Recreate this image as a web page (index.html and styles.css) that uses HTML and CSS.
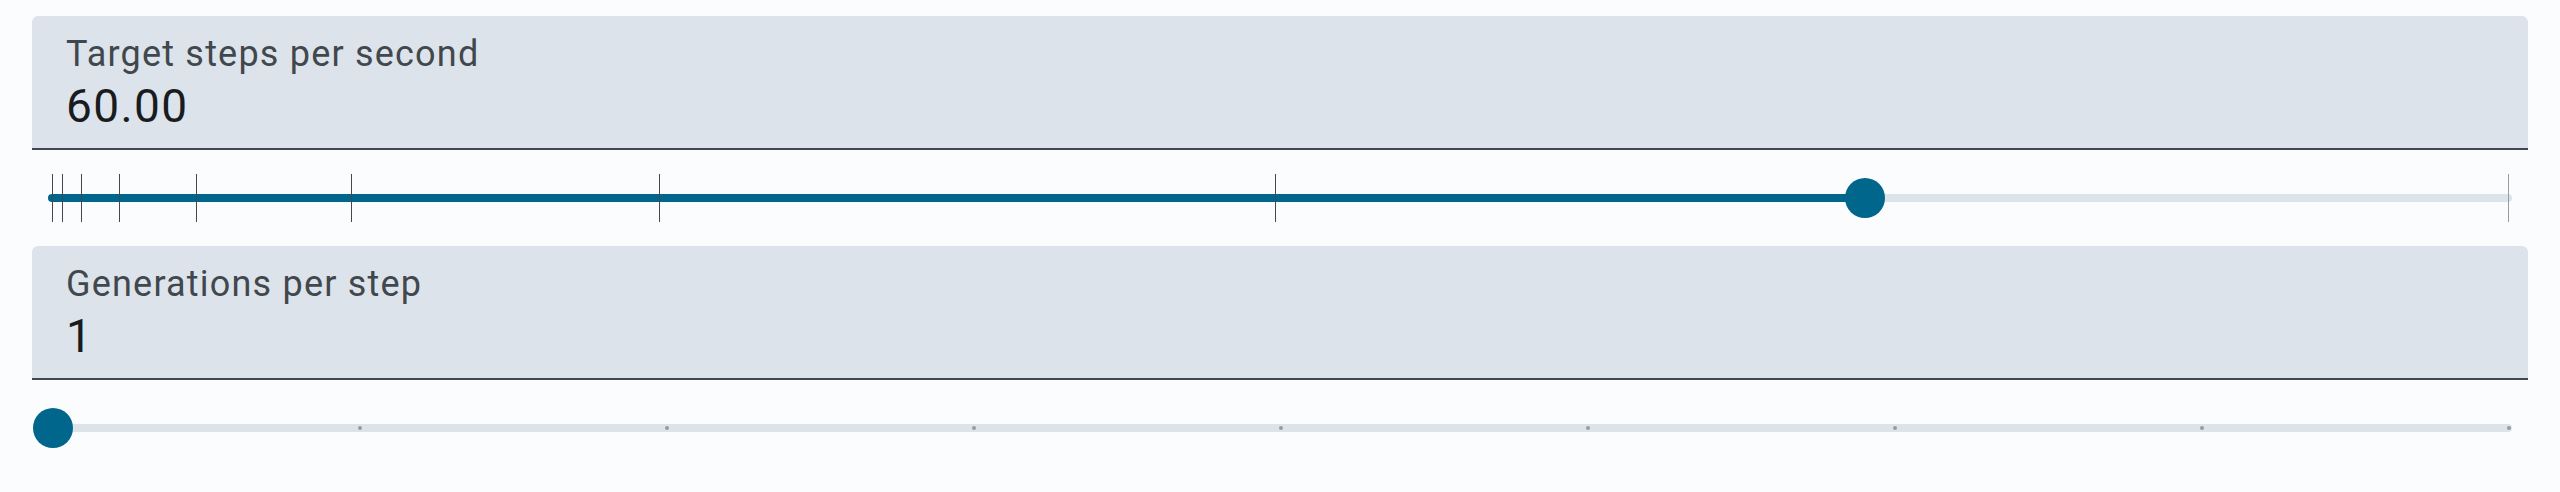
FILE: index.html
```html
<!DOCTYPE html>
<html lang="en">
<head>
<meta charset="utf-8">
<title>Simulation speed</title>
<link rel="stylesheet" href="styles.css">
</head>
<body>
<div class="panel">
  <div class="field">
    <div class="label">Target steps per second</div>
    <div class="value">60.00</div>
  </div>
  <div class="slider">
    <div class="track">
      <div class="rail">
        <div class="active" style="width: calc(73.78% + 4px)"></div>
        <div class="tick" style="left: 0%"></div>
        <div class="tick" style="left: 0.392%"></div>
        <div class="tick" style="left: 1.176%"></div>
        <div class="tick" style="left: 2.745%"></div>
        <div class="tick" style="left: 5.882%"></div>
        <div class="tick" style="left: 12.157%"></div>
        <div class="tick" style="left: 24.706%"></div>
        <div class="tick" style="left: 49.804%"></div>
        <div class="tick tick-off" style="left: 100%"></div>
        <div class="thumb" style="left: 73.78%"></div>
      </div>
    </div>
  </div>

  <div class="field">
    <div class="label">Generations per step</div>
    <div class="value">1</div>
  </div>
  <div class="slider">
    <div class="track">
      <div class="rail">
        <div class="dot" style="left: 12.5%"></div>
        <div class="dot" style="left: 25%"></div>
        <div class="dot" style="left: 37.5%"></div>
        <div class="dot" style="left: 50%"></div>
        <div class="dot" style="left: 62.5%"></div>
        <div class="dot" style="left: 75%"></div>
        <div class="dot" style="left: 87.5%"></div>
        <div class="dot" style="left: 100%"></div>
        <div class="thumb" style="left: 0%"></div>
      </div>
    </div>
  </div>
</div>
</body>
</html>
```

FILE: styles.css
```css
html, body {
  margin: 0;
  padding: 0;
  background: #fbfcfe;
}

body {
  font-family: Roboto, "Liberation Sans", sans-serif;
}

.panel {
  display: flex;
  flex-direction: column;
  padding: 16px 32px;
}

.field {
  box-sizing: border-box;
  height: 134px;
  background: #dde3ea;
  border-radius: 6px 6px 0 0;
  border-bottom: 2px solid #41484d;
  padding: 18px 34px 0 34px;
}

.label {
  font-size: 36px;
  line-height: 41px;
  letter-spacing: 1.2px;
  color: #41484d;
}

.value {
  margin-top: 4px;
  font-size: 46px;
  line-height: 54px;
  letter-spacing: 1.4px;
  color: #191c1e;
}

.slider {
  height: 96px;
  display: flex;
  align-items: center;
  padding: 0 16px;
}

.track {
  flex: 1;
  height: 8px;
  border-radius: 4px;
  background: #dce3e9;
  position: relative;
}

.rail {
  position: absolute;
  top: 0;
  bottom: 0;
  left: 4px;
  right: 4px;
}

.active {
  position: absolute;
  top: 0;
  bottom: 0;
  left: -4px;
  background: #00668b;
  border-radius: 4px 0 0 4px;
}

.tick {
  position: absolute;
  top: -20px;
  width: 1px;
  height: 48px;
  background: #44474e;
}

.tick-off {
  background: #9a9ca1;
}

.dot {
  position: absolute;
  top: 2px;
  width: 4px;
  height: 4px;
  margin-left: -1.5px;
  border-radius: 50%;
  background: #989ca2;
}

.thumb {
  position: absolute;
  top: 50%;
  width: 40px;
  height: 40px;
  margin: -20px 0 0 -19.5px;
  border-radius: 50%;
  background: #00668b;
}
```
